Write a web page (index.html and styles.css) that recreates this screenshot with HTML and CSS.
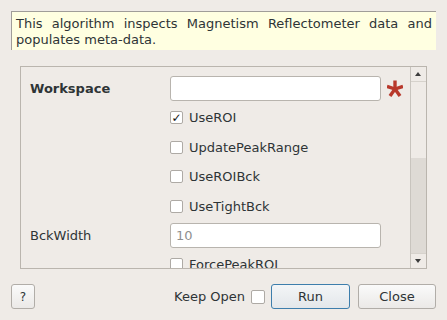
FILE: index.html
```html
<!DOCTYPE html>
<html lang="en">
<head>
    <meta charset="UTF-8">
    <title>MRInspectData</title>
    <link rel="stylesheet" href="styles.css">
</head>
<body>
    <div class="desc">
        This algorithm inspects Magnetism Reflectometer data and populates meta-data.
    </div>

    <div class="panel">
        <div class="rows">
            <div class="row">
                <span class="label bold">Workspace</span>
                <div class="field"></div>
                <svg class="star" width="16" height="17" viewBox="0 0 16 17">
                    <g stroke="#b8382b" stroke-width="3.4" stroke-linecap="butt">
                        <line x1="8" y1="9" x2="8" y2="0.5"/>
                        <line x1="8" y1="9" x2="16" y2="6.4"/>
                        <line x1="8" y1="9" x2="0" y2="6.4"/>
                        <line x1="8" y1="9" x2="13" y2="16"/>
                        <line x1="8" y1="9" x2="3" y2="16"/>
                    </g>
                </svg>
            </div>
            <div class="row">
                <span class="label"></span>
                <label class="check"><span class="box">&#10003;</span>UseROI</label>
            </div>
            <div class="row">
                <span class="label"></span>
                <label class="check"><span class="box"></span>UpdatePeakRange</label>
            </div>
            <div class="row">
                <span class="label"></span>
                <label class="check"><span class="box"></span>UseROIBck</label>
            </div>
            <div class="row">
                <span class="label"></span>
                <label class="check"><span class="box"></span>UseTightBck</label>
            </div>
            <div class="row">
                <span class="label">BckWidth</span>
                <div class="field hint">10</div>
            </div>
            <div class="row">
                <span class="label"></span>
                <label class="check"><span class="box"></span>ForcePeakROI</label>
            </div>
        </div>
        <div class="scrollbar">
            <div class="arrow up"></div>
            <div class="handle"></div>
            <div class="track"></div>
            <div class="arrow down"></div>
        </div>
    </div>

    <div class="buttons">
        <button class="btn help">?</button>
        <div class="spacer"></div>
        <span class="keep">Keep Open</span>
        <span class="box keep-box"></span>
        <button class="btn run">Run</button>
        <button class="btn close">Close</button>
    </div>
</body>
</html>
```

FILE: styles.css
```css
body {
    margin: 0;
    background-color: #efebe7;
    font-family: "DejaVu Sans", sans-serif;
    font-size: 13px;
    color: #2e3436;
}
.desc {
    margin: 11px 11px 0 11px;
    height: 39px;
    box-sizing: border-box;
    padding: 4px 4px 0 4px;
    background-color: #ffffe1;
    border-top: 1px solid #a09d99;
    border-left: 1px solid #a09d99;
    line-height: 16px;
    text-align: justify;
}
.panel {
    display: flex;
    height: 203px;
    box-sizing: border-box;
    margin: 16px 20px 0 20px;
    border: 1px solid #bab5ae;
}
.rows {
    flex: 1;
    overflow: hidden;
    padding: 9px 0 0 9px;
    display: flex;
    flex-direction: column;
    gap: 4.4px;
}
.row {
    display: flex;
    align-items: center;
    height: 25px;
    flex-shrink: 0;
}
.label {
    width: 140px;
    flex-shrink: 0;
}
.bold {
    font-weight: bold;
}
.field {
    width: 211px;
    height: 25px;
    box-sizing: border-box;
    background-color: #ffffff;
    border: 1px solid #b8b4ae;
    border-radius: 3px;
    padding: 4px 5px;
    line-height: 15px;
}
.hint {
    color: #8f8f8f;
}
.star {
    margin-left: 6px;
}
.check {
    display: flex;
    align-items: center;
}
.box {
    width: 13px;
    height: 13px;
    box-sizing: border-box;
    background-color: #ffffff;
    border: 1px solid #aeaaa5;
    border-radius: 2px;
    margin-right: 6px;
    font-size: 12px;
    font-weight: bold;
    line-height: 12px;
    text-align: center;
    color: #111111;
}
.scrollbar {
    width: 15px;
    border-left: 1px solid #c8c4be;
    display: flex;
    flex-direction: column;
}
.arrow {
    height: 14px;
    flex-shrink: 0;
    position: relative;
}
.arrow.up {
    border-bottom: 1px solid #d6d2cc;
}
.arrow.down {
    border-top: 1px solid #d6d2cc;
}
.arrow::after {
    content: "";
    position: absolute;
    left: 4px;
    border-left: 3.5px solid transparent;
    border-right: 3.5px solid transparent;
}
.arrow.up::after {
    top: 5px;
    border-bottom: 4px solid #3c3c3c;
}
.arrow.down::after {
    top: 5px;
    border-top: 4px solid #3c3c3c;
}
.handle {
    height: 76px;
    flex-shrink: 0;
}
.track {
    flex: 1;
    background-color: #dedad5;
}
.buttons {
    display: flex;
    align-items: center;
    margin: 15px 11px 0 11px;
    height: 25px;
}
.spacer {
    flex: 1;
}
.btn {
    height: 25px;
    font-family: "DejaVu Sans", sans-serif;
    font-size: 13px;
    color: #2e3436;
    background: linear-gradient(#fafafa, #ebe9e7);
    border: 1px solid #b1ada8;
    border-radius: 3px;
    padding: 0;
}
.help {
    width: 24px;
    font-size: 12px;
}
.keep {
    margin-right: 6px;
}
.keep-box {
    width: 14px;
    height: 14px;
    margin-right: 6px;
}
.run {
    width: 79px;
    border-color: #3d7eac;
    background: linear-gradient(#f3f5f7, #e3e7ea);
    margin-right: 8px;
}
.close {
    width: 78px;
}
```
